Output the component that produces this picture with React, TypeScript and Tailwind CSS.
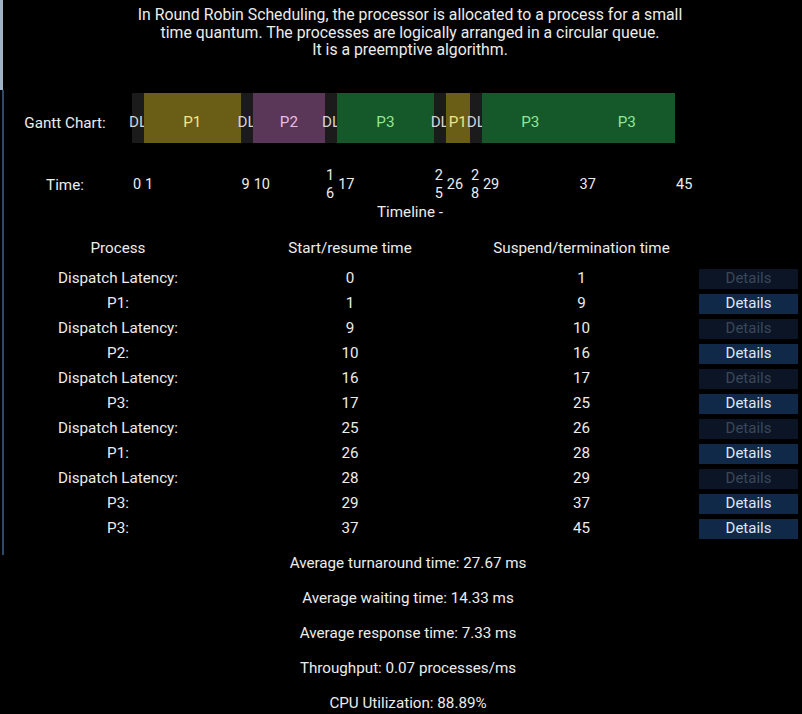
import React from "react";

type Seg = { label: string; start: number; end: number; kind: "dl" | "p1" | "p2" | "p3" };

const SCALE = 12.07;

const segments: Seg[] = [
  { label: "DL", start: 0, end: 1, kind: "dl" },
  { label: "P1", start: 1, end: 9, kind: "p1" },
  { label: "DL", start: 9, end: 10, kind: "dl" },
  { label: "P2", start: 10, end: 16, kind: "p2" },
  { label: "DL", start: 16, end: 17, kind: "dl" },
  { label: "P3", start: 17, end: 25, kind: "p3" },
  { label: "DL", start: 25, end: 26, kind: "dl" },
  { label: "P1", start: 26, end: 28, kind: "p1" },
  { label: "DL", start: 28, end: 29, kind: "dl" },
  { label: "P3", start: 29, end: 37, kind: "p3" },
  { label: "P3", start: 37, end: 45, kind: "p3" },
];

const segStyle: Record<Seg["kind"], string> = {
  dl: "bg-[#1b1b1b] text-[#d4d4d4]",
  p1: "bg-[#6a5e16] text-[#f3e58a]",
  p2: "bg-[#5a3659] text-[#e6bde6]",
  p3: "bg-[#15592a] text-[#93e693]",
};

const rows = [
  { name: "Dispatch Latency:", start: 0, end: 1, dl: true },
  { name: "P1:", start: 1, end: 9, dl: false },
  { name: "Dispatch Latency:", start: 9, end: 10, dl: true },
  { name: "P2:", start: 10, end: 16, dl: false },
  { name: "Dispatch Latency:", start: 16, end: 17, dl: true },
  { name: "P3:", start: 17, end: 25, dl: false },
  { name: "Dispatch Latency:", start: 25, end: 26, dl: true },
  { name: "P1:", start: 26, end: 28, dl: false },
  { name: "Dispatch Latency:", start: 28, end: 29, dl: true },
  { name: "P3:", start: 29, end: 37, dl: false },
  { name: "P3:", start: 37, end: 45, dl: false },
];

const stats = [
  "Average turnaround time: 27.67 ms",
  "Average waiting time: 14.33 ms",
  "Average response time: 7.33 ms",
  "Throughput: 0.07 processes/ms",
  "CPU Utilization: 88.89%",
];

export default function App() {
  return (
    <div className="relative w-[802px] h-[714px] overflow-hidden bg-black text-[#ececec] text-[15.2px] font-['Roboto',sans-serif]">
      {/* window frame bits at the left edge */}
      <div className="absolute left-0 top-0 w-[3px] h-[90px] bg-[#9fb3c4]" />
      <div className="absolute left-[2px] top-[90px] w-[2px] h-[465px] bg-[#2b4a6c]" />

      <div className="w-[820px]">
        <div className="pt-[6px] text-center text-[15.8px] leading-[17.5px]">
          <p>In Round Robin Scheduling, the processor is allocated to a process for a small</p>
          <p>time quantum. The processes are logically arranged in a circular queue.</p>
          <p>It is a preemptive algorithm.</p>
        </div>

        <div className="mt-[34.5px] flex items-center h-[50px]">
          <div className="w-[130px] pt-[10px] text-center">Gantt Chart:</div>
          <div className="ml-[2px] flex h-[50px]">
            {segments.map((s, i) => (
              <div
                key={i}
                className={`flex justify-center items-center pt-[10px] whitespace-nowrap ${segStyle[s.kind]}`}
                style={{ width: (s.end - s.start) * SCALE }}
              >
                <span className="leading-none">{s.label}</span>
              </div>
            ))}
          </div>
        </div>

        <div className="mt-[24px] flex items-center h-[36px] leading-[18px] text-[14.5px]">
          <div className="w-[130px] text-center text-[15.2px]">Time:</div>
          <div className="ml-[2px] flex items-center">
            {segments.map((s, i) => (
              <div key={i} className="break-all pl-[1px]" style={{ width: (s.end - s.start) * SCALE }}>
                {s.start}
              </div>
            ))}
            <div className="pl-[1px]">45</div>
          </div>
        </div>

        <div className="text-center leading-[18px]">Timeline -</div>

        <div className="mt-[15px] grid grid-cols-[236px_228px_235px_99px] h-[25px] items-center text-center">
          <div>Process</div>
          <div>Start/resume time</div>
          <div>Suspend/termination time</div>
          <div />
        </div>

        <div className="mt-[5px]">
          {rows.map((r, i) => (
            <div key={i} className="grid grid-cols-[236px_228px_235px_99px] h-[25px] items-center text-center">
              <div>{r.name}</div>
              <div>{r.start}</div>
              <div>{r.end}</div>
              <div
                className={`h-[20px] flex items-center justify-center text-[15px] ${
                  r.dl ? "bg-[#0b1526] text-[#3b4757]" : "bg-[#112949] text-[#dfe6f2]"
                }`}
              >
                Details
              </div>
            </div>
          ))}
        </div>

        <div className="mt-[5px]">
          {stats.map((s) => (
            <div key={s} className="h-[35px] flex items-center justify-center pr-[4px]">
              {s}
            </div>
          ))}
        </div>
      </div>
    </div>
  );
}
